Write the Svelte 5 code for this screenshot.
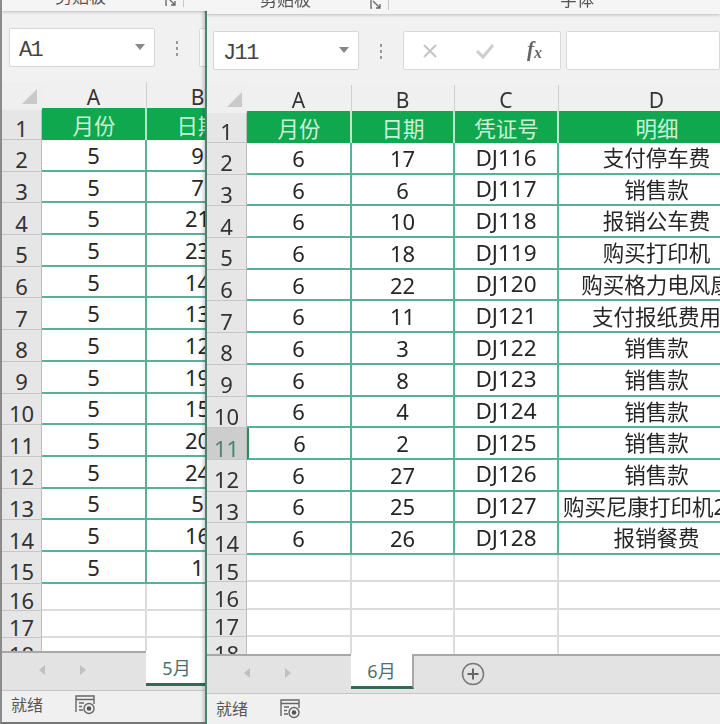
<script>
  const may = {
    cell: 'A1', sheet: '5月', month: 5, selected: 0, plus: false, formula: false, tail: 3,
    rows: [9, 7, 21, 23, 14, 13, 12, 19, 15, 20, 24, 5, 16, 1].map((d) => [d, '', ''])
  };
  const june = {
    cell: 'J11', sheet: '6月', month: 6, selected: 11, plus: true, formula: true, tail: 4,
    rows: [
      [17,'DJ116','支付停车费'],[6,'DJ117','销售款'],[10,'DJ118','报销公车费'],[18,'DJ119','购买打印机'],
      [22,'DJ120','购买格力电风扇'],[11,'DJ121','支付报纸费用'],[3,'DJ122','销售款'],[8,'DJ123','销售款'],
      [4,'DJ124','销售款'],[2,'DJ125','销售款'],[27,'DJ126','销售款'],[25,'DJ127','购买尼康打印机2'],[26,'DJ128','报销餐费']
    ]
  };
  const heads = ['月份', '日期', '凭证号', '明细'];
  const cols = ['A', 'B', 'C', 'D'];
</script>

{#snippet sheetWindow(w, cls)}
  <section class="window {cls}">
    <div class="ribbon">
      <span class="group clip">剪贴板</span>
      <svg class="launcher" width="14" height="12" viewBox="0 0 14 12"><path d="M1 0v8h1M3 1l7 7M6 8h4V4" fill="none" stroke="#666" stroke-width="1.3"/></svg>
      <span class="rsep"></span>
      {#if w.formula}<span class="group font">字体</span>{/if}
    </div>
    <div class="formula">
      <div class="namebox"><span>{w.cell}</span><i class="caret"></i></div>
      <div class="dots"><i></i><i></i><i></i></div>
      <div class="fbtns">
        <svg width="18" height="18" viewBox="0 0 18 18"><path d="M3 3l12 12M15 3L3 15" stroke="#c4c4c4" stroke-width="2" fill="none"/></svg>
        <svg width="20" height="18" viewBox="0 0 20 18"><path d="M2 9l6 6L18 3" stroke="#cdcdcd" stroke-width="3" fill="none"/></svg>
        <span class="fx">f<sub>x</sub></span>
      </div>
      <div class="finput"></div>
    </div>
    <div class="sheet">
      <div class="row colhead">
        <div class="corner"><i></i></div>
        {#each cols as c}<div class="col">{c}</div>{/each}
      </div>
      <div class="row head">
        <div class="rh">1</div>
        {#each heads as h}<div class="hc">{h}</div>{/each}
      </div>
      {#each w.rows as r, i}
        <div class="row data">
          <div class="rh" class:sel={i + 2 === w.selected}>{i + 2}</div>
          <div class="dc num" class:active={i + 2 === w.selected}>{w.month}</div>
          <div class="dc num">{r[0]}</div>
          <div class="dc code">{r[1]}</div>
          <div class="dc" class:long={r[2].length > 7}>{r[2]}</div>
        </div>
      {/each}
      {#each Array(w.tail) as _, i}
        <div class="row empty">
          <div class="rh">{w.rows.length + 2 + i}</div>
          <div class="ec"></div><div class="ec"></div><div class="ec"></div><div class="ec"></div>
        </div>
      {/each}
    </div>
    <div class="tabs">
      <div class="nav">
        <i class="tri left"></i><i class="tri right"></i>
      </div>
      <div class="tab">{w.sheet}</div>
      <div class="tabrest">
        {#if w.plus}
          <svg class="plus" width="24" height="24" viewBox="0 0 24 24"><circle cx="12" cy="12" r="10.5" fill="none" stroke="#777" stroke-width="1.5"/><path d="M12 6.5v11M6.5 12h11" stroke="#666" stroke-width="2"/></svg>
        {/if}
      </div>
    </div>
    <div class="status">
      <span>就绪</span>
      <svg width="22" height="22" viewBox="0 0 22 22"><path d="M2 19V3h18v8M2 6.5h18M5 10h5M5 13.5h3M5 17h4" fill="none" stroke="#666" stroke-width="1.4"/><circle cx="15" cy="15.5" r="5" fill="none" stroke="#666" stroke-width="1.4"/><circle cx="15" cy="15.5" r="2.3" fill="#555"/></svg>
    </div>
  </section>
{/snippet}

<main class="desk">
  {@render sheetWindow(may, 'back')}
  {@render sheetWindow(june, 'front')}
</main>

<style>
  :global(body) { margin: 0; overflow: hidden; background: #888; }
  .desk { position: relative; width: 720px; height: 724px; overflow: hidden; filter: blur(0.35px); font-family: "Noto Sans", "Noto Sans CJK SC", sans-serif; color: #262626; }
  .window { position: absolute; top: 0; height: 727px; display: flex; flex-direction: column; background: #f0f0f0; overflow: hidden; box-sizing: border-box; }
  .back { left: 0; top: -3px; width: 300px; border-left: 2px solid #8b8b8b; border-bottom: 2px solid #777; }
  .front { left: 205px; width: 515px; border-left: 2px solid #4f7f70; box-shadow: -2px 0 3px rgba(0,0,0,.18); }

  .ribbon { height: 14px; flex: none; position: relative; background: #f5f5f5; box-shadow: 0 1px 3px rgba(0,0,0,.22); z-index: 1; overflow: hidden; }
  .group { position: absolute; top: -12px; font-size: 17px; line-height: 24px; color: #555; }
  .clip { left: 53px; }
  .font { left: 353px; }
  .launcher { position: absolute; left: 163px; top: 0; }
  .rsep { position: absolute; left: 181px; top: 0; width: 1px; height: 10px; background: #c8c8c8; }

  .formula { height: 71px; flex: none; display: flex; align-items: flex-start; padding: 17px 0 0 6px; box-sizing: border-box; background: #f1f1f1; }
  .back .formula { padding-left: 7px; }
  .namebox { width: 146px; height: 39px; flex: none; box-sizing: border-box; background: #fff; border: 1px solid #d6d6d6; border-radius: 2px; display: flex; align-items: center; justify-content: space-between; padding: 6px 9px 0 9px; font: 22px "Liberation Mono", "DejaVu Sans Mono", monospace; letter-spacing: -1.6px; color: #444; }
  .caret { width: 0; height: 0; border: 5px solid transparent; border-top: 6px solid #888; border-bottom: 0; margin-top: -8px; }
  .dots { width: 44px; flex: none; display: flex; flex-direction: column; align-items: center; gap: 3px; padding-top: 13px; }
  .dots i { width: 2px; height: 3px; background: #999; }
  .fbtns { width: 158px; height: 39px; flex: none; box-sizing: border-box; background: #fff; border: 1px solid #d9d9d9; border-radius: 2px; display: flex; align-items: center; justify-content: space-between; padding: 0 18px 0 17px; margin-right: 5px; }
  .fbtns svg:nth-child(2) { margin-left: 3px; }
  .fx { font: italic bold 21px "Liberation Serif", serif; color: #666; margin-top: -3px; }
  .fx sub { font-size: 16px; vertical-align: -2px; }
  .finput { flex: 1; height: 39px; box-sizing: border-box; background: #fff; border: 1px solid #d9d9d9; border-radius: 2px; }

  .sheet { height: 569px; flex: none; overflow: hidden; background: #fff; }
  .row { display: grid; grid-template-columns: 40px 105px 103px 104px 197px; }
  .colhead { height: 26px; background: #f0f0f0; }
  .corner { position: relative; background: #efefef; }
  .corner i { position: absolute; left: 20px; top: 7px; width: 0; height: 0; border-left: 15px solid transparent; border-bottom: 15px solid #c9c9c9; }
  .col { display: flex; align-items: center; justify-content: center; font-size: 21px; line-height: 26px; padding: 2px 2px 0 0; box-sizing: border-box; box-shadow: inset -1px 0 0 #cfcfcf; color: #333; }

  .head { height: 32px; }
  .rh { display: flex; align-items: center; justify-content: center; box-sizing: border-box; padding-top: 8px; background: #e6e6e6; border-bottom: 1px solid #c6c6c6; border-right: 1px solid #bdbdbd; font-size: 22px; color: #333; overflow: hidden; line-height: 1; }
  .hc { display: flex; align-items: center; justify-content: center; box-sizing: border-box; padding-left: 1px; background: #10a84e; color: #c9f2d9; font-size: 21.5px; border-right: 2px solid #b9e8cd; white-space: nowrap; }

  .data { height: 31.7px; }
  .dc { display: flex; align-items: center; justify-content: center; box-sizing: border-box; background: #fff; border-right: 2px solid #58b096; border-bottom: 2px solid #58b096; font-size: 21.5px; white-space: nowrap; line-height: 1; }
  .dc.num { font-size: 22px; }
  .dc.code { font-size: 22.5px; }
  .dc.long { padding-right: 24px; }
  .dc.active { border-left: 2px solid #2c8a63; }
  .rh.sel { background: #cdcdcd; color: #4c8277; }

  .empty { height: 27.3px; }
  .empty .rh { padding-top: 6px; }
  .ec { box-sizing: border-box; background: #fff; border-right: 2px solid #dcdcdc; border-bottom: 2px solid #dcdcdc; }

  .tabs { height: 40px; flex: none; display: flex; background: #e3e3e3; border-bottom: 1px solid #c4c4c4; box-sizing: border-box; }
  .nav { width: 144px; flex: none; box-sizing: border-box; border-top: 2px solid #a8a8a8; display: flex; align-items: center; gap: 35px; padding: 0 0 4px 37px; }
  .tri { width: 0; height: 0; border: 5px solid transparent; }
  .tri.left { border-left: 0; border-right: 6px solid #c0c0c0; }
  .tri.right { border-right: 0; border-left: 6px solid #c0c0c0; }
  .tab { width: 63px; height: 35px; flex: none; box-sizing: border-box; background: #fff; border-bottom: 3px solid #2f6b55; border-right: 2px solid #a8a8a8; display: flex; align-items: center; justify-content: center; font-size: 18px; color: #4f6f6c; }
  .tabrest { flex: 1; box-sizing: border-box; border-top: 2px solid #a8a8a8; position: relative; }
  .plus { position: absolute; left: 47px; top: 6px; }

  .status { flex: 1; display: flex; align-items: center; gap: 31px; padding: 0 0 6px 9px; background: #f0f0f0; font-size: 16px; color: #555; }
</style>
